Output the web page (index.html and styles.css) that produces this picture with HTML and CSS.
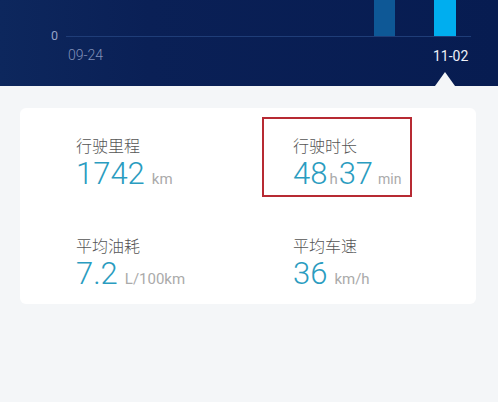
FILE: index.html
```html
<!DOCTYPE html>
<html lang="zh-CN">
<head>
<meta charset="utf-8">
<title>行驶统计</title>
<link rel="stylesheet" href="styles.css">
</head>
<body>
<header class="chart">
  <svg class="chart-svg" width="498" height="86" viewBox="0 0 498 86">
    <rect x="374" y="0" width="21" height="36" fill="#0e5896"/>
    <rect x="434" y="0" width="22" height="36" fill="#00aeef"/>
    <line x1="66" y1="36.5" x2="471" y2="36.5" stroke="#1f3d78" stroke-width="1"/>
    <text class="axis-y" x="51" y="40">0</text>
    <text class="axis-x" x="68" y="60">09-24</text>
    <text class="axis-x active" x="433" y="61">11-02</text>
  </svg>
  <span class="pointer"></span>
</header>

<main class="page">
  <section class="card">
    <div class="stat">
      <div class="stat-label">行驶里程</div>
      <div class="stat-value">1742<span class="unit">km</span></div>
    </div>
    <div class="stat highlighted">
      <div class="stat-label">行驶时长</div>
      <div class="stat-value">48<span class="unit unit-h">h</span>37<span class="unit unit-min">min</span></div>
    </div>
    <div class="stat">
      <div class="stat-label">平均油耗</div>
      <div class="stat-value">7.2<span class="unit">L/100km</span></div>
    </div>
    <div class="stat">
      <div class="stat-label">平均车速</div>
      <div class="stat-value">36<span class="unit">km/h</span></div>
    </div>
  </section>
</main>
</body>
</html>
```

FILE: styles.css
```css
html, body {
  margin: 0;
  padding: 0;
}

body {
  width: 498px;
  height: 402px;
  overflow: hidden;
  background: #f4f6f8;
  font-family: Roboto, "Noto Sans CJK SC", sans-serif;
}

/* dark chart strip */
.chart {
  position: relative;
  height: 86px;
  background: linear-gradient(90deg, #0d275d 0%, #0a2056 30%, #071c51 100%);
}

.chart-svg {
  display: block;
}

.axis-y {
  font-family: Roboto, sans-serif;
  font-size: 12.5px;
  fill: #95a2c6;
}

.axis-x {
  font-family: Roboto, sans-serif;
  font-size: 14px;
  font-weight: 300;
  fill: #8190b8;
}

.axis-x.active {
  font-weight: 400;
  fill: #eef1f8;
}

/* marker under the selected bar */
.pointer {
  position: absolute;
  left: 435px;
  bottom: 0;
  width: 0;
  height: 0;
  border-left: 10px solid transparent;
  border-right: 10px solid transparent;
  border-bottom: 14px solid #f4f6f8;
}

.page {
  padding: 22px 22px 0 20px;
}

.card {
  display: grid;
  grid-template-columns: 217px 1fr;
  row-gap: 30px;
  height: 196px;
  box-sizing: border-box;
  padding: 27px 0 0 56px;
  background: #ffffff;
  border-radius: 6px;
}

.stat {
  position: relative;
}

.stat-label {
  font-family: "Noto Sans CJK SC", sans-serif;
  font-size: 16px;
  font-weight: 300;
  line-height: 20px;
  color: #555555;
}

.stat-value {
  margin-top: 3px;
  font-family: Roboto, sans-serif;
  font-weight: 300;
  font-size: 31px;
  line-height: 32px;
  color: #2a9cc0;
  white-space: nowrap;
}

.unit {
  margin-left: 7px;
  font-size: 15px;
  font-weight: 400;
  color: #aaaaaa;
}

.unit-h {
  margin: 0 1px 0 2px;
}

.unit-min {
  margin-left: 5px;
  font-size: 14px;
}

/* red outline around the duration figure */
.highlighted::after {
  content: "";
  position: absolute;
  left: -31px;
  top: -18px;
  width: 150px;
  height: 80px;
  box-sizing: border-box;
  border: 2.5px solid #b72a33;
}
```
